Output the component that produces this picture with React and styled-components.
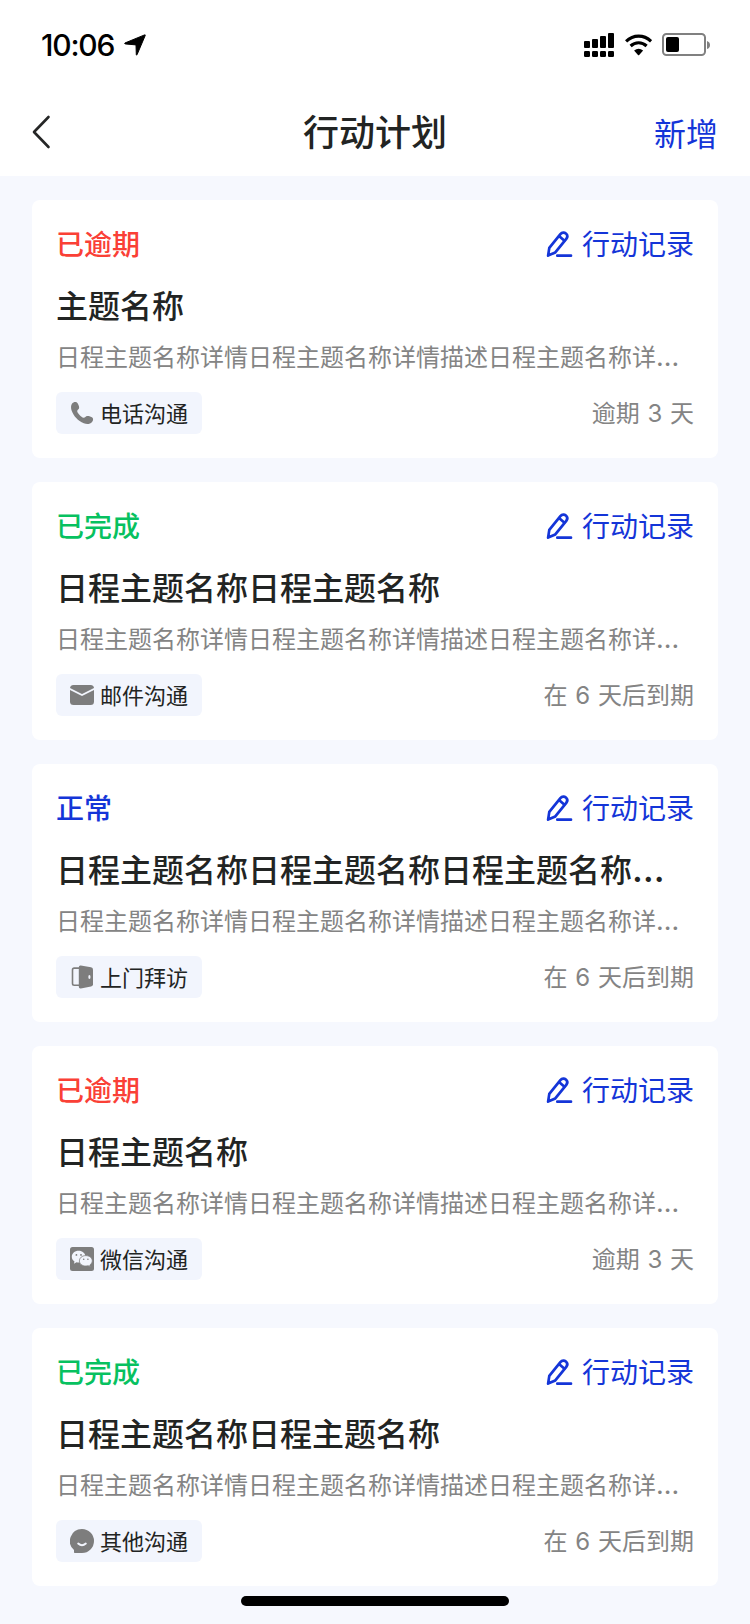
import React from "react";
import styled, { createGlobalStyle } from "styled-components";

const GlobalStyle = createGlobalStyle`
  * { box-sizing: border-box; }
  body {
    margin: 0;
    background: #f6f8fe;
    color: #222423;
    font-family: Inter, "Noto Sans CJK SC", sans-serif;
  }
`;

const Screen = styled.div`
  width: 750px;
  height: 1624px;
  overflow: hidden;
  display: flex;
  flex-direction: column;
`;

const Header = styled.header`
  height: 176px;
  background: #fff;
`;

const StatusBar = styled.div`
  height: 88px;
  padding: 2px 40px 0 41px;
  display: flex;
  justify-content: space-between;
  align-items: center;
`;

const Clock = styled.div`
  display: flex;
  align-items: center;
  gap: 10px;
  color: #000;
  font-size: 30px;
  font-weight: 500;
  letter-spacing: -1.2px;
`;

const Indicators = styled.div`
  display: flex;
  align-items: center;
  gap: 10px;
`;

const NavBar = styled.nav`
  height: 88px;
  padding: 0 32px;
  display: grid;
  grid-template-columns: 1fr auto 1fr;
  align-items: center;
`;

const BackButton = styled.button`
  width: 20px;
  height: 36px;
  padding: 0;
  border: 0;
  background: none;
  display: flex;
`;

const NavTitle = styled.h1`
  margin: 0;
  padding-top: 2px;
  font-size: 36px;
  line-height: 50px;
  font-weight: 500;
`;

const NavAction = styled.button`
  justify-self: end;
  padding: 5px 0 0;
  border: 0;
  background: none;
  color: #1435d8;
  font: inherit;
  font-size: 32px;
  line-height: 44px;
`;

const PlanList = styled.main`
  padding: 24px 32px 0;
  display: flex;
  flex-direction: column;
  gap: 24px;
`;

const Card = styled.article`
  height: 258px;
  padding: 25px 24px 24px;
  border-radius: 8px;
  background: #fff;
`;

const CardRow = styled.div`
  display: flex;
  justify-content: space-between;
  align-items: center;
`;

const statusColors = { overdue: "#fa4036", done: "#07c160", normal: "#1435d8" };

const Status = styled.span`
  font-size: 28px;
  line-height: 40px;
  font-weight: 500;
  color: ${(p) => statusColors[p.$tone]};
`;

const RecordButton = styled.button`
  display: flex;
  align-items: center;
  gap: 8px;
  padding: 0;
  border: 0;
  background: none;
  color: #1435d8;
  font: inherit;
  font-size: 28px;
  line-height: 40px;
`;

const CardTitle = styled.h2`
  margin: 20px 0 12px;
  font-size: 32px;
  line-height: 44px;
  font-weight: 500;
  white-space: nowrap;
`;

const Description = styled.p`
  margin: 0 0 17px;
  font-size: 24px;
  line-height: 34px;
  color: #848484;
  white-space: nowrap;
`;

const Ellipsis = styled.span`
  font-size: 1.12em;
  line-height: 0;
`;

const Tag = styled.span`
  height: 42px;
  padding: 0 14px;
  display: flex;
  align-items: center;
  gap: 6px;
  border-radius: 6px;
  background: #f2f5fd;
  font-size: 22px;
`;

const TagLabel = styled.span`
  padding-bottom: 3px;
`;

const Due = styled.span`
  padding-top: 2px;
  font-size: 24px;
  line-height: 34px;
  word-spacing: 1px;
  color: #848484;
`;

const HomeIndicator = styled.div`
  flex: none;
  width: 268px;
  height: 10px;
  margin: 10px auto 0;
  border-radius: 5px;
  background: #000;
`;

const LocationIcon = () => (
  <svg width="22" height="22" viewBox="0 0 22 22">
    <path d="M.9 9 20.600.9q.9-.3.6.6L13 20.800q-.5.700-.7-.2L12 10.900 1.100 9.900q-.8-.5-.2-.9Z" fill="#000" stroke="#000" strokeWidth="1" strokeLinejoin="round" />
  </svg>
);

const SignalIcon = () => (
  <svg width="30" height="24" viewBox="0 0 30 24">
    {[8, 6, 3, 0].map((top, i) => (
      <g key={top}>
        <rect x={i * 8} y={top} width="6" height={15 - top} rx="1" />
        <rect x={i * 8} y="18" width="6" height="6" rx="1.2" />
      </g>
    ))}
  </svg>
);

const WifiIcon = () => (
  <svg width="28" height="22" viewBox="0 0 28 22" fill="none" stroke="#000" strokeWidth="3.1">
    <path d="M2.100 7.300Q7.500 2.100 14.600 2.100T27.100 7.300" />
    <path d="M6.600 12Q10.100 8.700 14.600 8.700T22.600 12" />
    <path d="M10.100 16.600Q14.600 12.800 19.100 16.600L15.200 21Q14.600 21.600 14 21Z" fill="#000" stroke="none" />
  </svg>
);

const BatteryIcon = () => (
  <svg width="48" height="24" viewBox="0 0 48 24">
    <rect x="1" y="1" width="42" height="21" rx="3.500" fill="none" stroke="#808080" strokeWidth="2" />
    <rect x="4" y="4" width="13" height="15" rx="2" />
    <path d="M45 8Q48 9 48 12T45 16Z" fill="#808080" />
  </svg>
);

const BackIcon = () => (
  <svg width="20" height="36" viewBox="0 0 20 36" fill="none" stroke="#252626" strokeWidth="2.600" strokeLinecap="round" strokeLinejoin="round">
    <path d="M16.500 3 2 18 16.500 33" />
  </svg>
);

const PenIcon = () => (
  <svg width="28" height="28" viewBox="0 0 28 28" fill="none" stroke="currentColor" strokeWidth="2.700" strokeLinecap="round" strokeLinejoin="round">
    <path d="M2.100 24.600 3.300 16.900 14.400 3.100C16 1.300 18.400 1.300 19.900 2.500 21.400 3.800 21.700 6 20.300 7.800L9.300 21.400Z" />
    <path d="M13.300 5.200 18.200 9.500M11.300 24.700H25" />
  </svg>
);

const PhoneGlyph = () => (
  <path d="M3.500 1.400C5 .8 6.800 1 7.600 2.200 8.800 4.200 9.300 5.800 9.100 7 8.900 8.400 7.200 8.800 7.200 10.200 7.600 12.400 11 16 13.600 16.800 15 17 15.600 15.200 17.200 15 19 14.900 21 15.600 22.300 16.600 23.600 17.800 23.200 19.800 22 21 20 23.200 17 23.600 13.800 22.200 8 19.800 3.600 15 1.600 9.400.6 6 .9 2.800 3.500 1.400Z" />
);

const MailGlyph = () => (
  <>
    <rect y="2" width="24" height="20" rx="3.500" />
    <path d="M-.5 5.800 12 12 24.500 5.800" fill="none" stroke="#f2f5fd" strokeWidth="1.700" />
  </>
);

const DoorGlyph = () => (
  <>
    <path d="M9 3.100H4.200Q2.500 3.100 2.500 4.800V18.600Q2.500 20.300 4.200 20.300H9" fill="none" stroke="#7d7d7d" strokeWidth="1.600" />
    <path d="M8.800 2.300Q8.800.3 10.800.6L21 2.300Q23 2.700 23 4.500V19.300Q23 21.200 21 21.600L10.800 23.400Q8.800 23.600 8.800 21.700Z" />
    <ellipse cx="19.400" cy="12" rx="1.100" ry="2" fill="#f2f5fd" />
  </>
);

const WechatGlyph = () => (
  <>
    <rect width="24" height="24" rx="2.500" />
    <path d="M8.600 3.800C4.600 3.800 1.800 6.500 1.800 9.700 1.800 11.700 2.800 13.300 4.500 14.500L3.900 16.700 6.500 15.300Q7.600 15.600 9 15.600C12.700 15.500 15.400 13 15.400 9.700S12.400 3.800 8.600 3.800Z" fill="#f2f5fd" />
    <path d="M15.800 8.600C12 8.600 9.400 11 9.400 13.900S12 19 15.800 19Q17 19 18.200 18.700L20.300 19.900 19.800 18C21.300 17 22.300 15.500 22.300 13.900 22.300 11 19.500 8.600 15.800 8.600Z" fill="#f2f5fd" stroke="#7d7d7d" strokeWidth=".8" />
    <circle cx="6.400" cy="7.900" r=".9" />
    <circle cx="11" cy="7.900" r=".9" />
    <circle cx="13.700" cy="12.300" r=".8" />
    <circle cx="17.900" cy="12.300" r=".8" />
  </>
);

const SmileGlyph = () => (
  <>
    <path d="M12 0A12 12 0 1 1 12 24H4.700Q4 24 4 23.200V21A12 12 0 0 1 12 0Z" />
    <path d="M8.200 14.600Q12 17.900 15.800 14.600" fill="none" stroke="#f2f5fd" strokeWidth="2" strokeLinecap="round" />
  </>
);

const channels = {
  phone: { label: "电话沟通", Glyph: PhoneGlyph },
  mail: { label: "邮件沟通", Glyph: MailGlyph },
  visit: { label: "上门拜访", Glyph: DoorGlyph },
  wechat: { label: "微信沟通", Glyph: WechatGlyph },
  other: { label: "其他沟通", Glyph: SmileGlyph },
};

const statusLabels = { overdue: "已逾期", done: "已完成", normal: "正常" };

const description = "日程主题名称详情日程主题名称详情描述日程主题名称详";

const plans = [
  { tone: "overdue", title: "主题名称", channel: "phone", due: "逾期 3 天" },
  { tone: "done", title: "日程主题名称日程主题名称", channel: "mail", due: "在 6 天后到期" },
  { tone: "normal", title: "日程主题名称日程主题名称日程主题名称", clipped: true, channel: "visit", due: "在 6 天后到期" },
  { tone: "overdue", title: "日程主题名称", channel: "wechat", due: "逾期 3 天" },
  { tone: "done", title: "日程主题名称日程主题名称", channel: "other", due: "在 6 天后到期" },
];

function PlanCard({ plan }) {
  const { label, Glyph } = channels[plan.channel];
  return (
    <Card>
      <CardRow>
        <Status $tone={plan.tone}>{statusLabels[plan.tone]}</Status>
        <RecordButton>
          <PenIcon />
          行动记录
        </RecordButton>
      </CardRow>
      <CardTitle>
        {plan.title}
        {plan.clipped && <Ellipsis>…</Ellipsis>}
      </CardTitle>
      <Description>
        {description}
        <Ellipsis>…</Ellipsis>
      </Description>
      <CardRow>
        <Tag>
          <svg width="24" height="24" viewBox="0 0 24 24" fill="#7d7d7d">
            <Glyph />
          </svg>
          <TagLabel>{label}</TagLabel>
        </Tag>
        <Due>{plan.due}</Due>
      </CardRow>
    </Card>
  );
}

export default function App() {
  return (
    <>
      <GlobalStyle />
      <Screen>
        <Header>
          <StatusBar>
            <Clock>
              10:06
              <LocationIcon />
            </Clock>
            <Indicators>
              <SignalIcon />
              <WifiIcon />
              <BatteryIcon />
            </Indicators>
          </StatusBar>
          <NavBar>
            <BackButton aria-label="返回">
              <BackIcon />
            </BackButton>
            <NavTitle>行动计划</NavTitle>
            <NavAction>新增</NavAction>
          </NavBar>
        </Header>
        <PlanList>
          {plans.map((plan, i) => (
            <PlanCard key={i} plan={plan} />
          ))}
        </PlanList>
        <HomeIndicator />
      </Screen>
    </>
  );
}
